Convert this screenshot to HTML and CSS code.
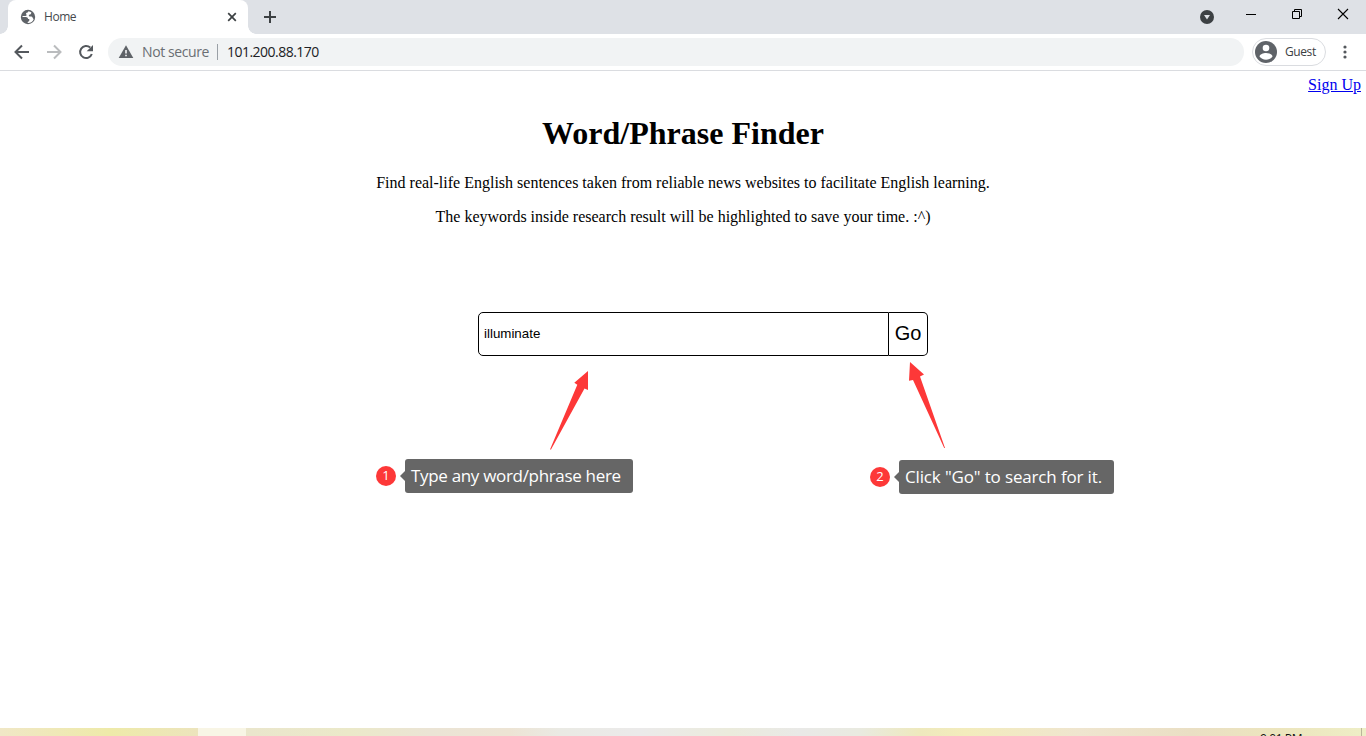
FILE: index.html
```html
<!DOCTYPE html>
<html lang="en">
<head>
<meta charset="utf-8">
<title>Home</title>
<link rel="stylesheet" href="styles.css">
</head>
<body>
<div class="window">
  <header class="tabstrip">
    <div class="tab">
      <svg class="globe" width="16" height="16" viewBox="0 0 16 16"><circle cx="8" cy="8" r="7.200" fill="#5f6368"/><path d="M8.400 2.200c-.4 1-.9 1.400-1.700 1.600-.8.3-.8 1-.3 1.600.6.700 0 1.300-1 1.500-1 .1-2.100-.1-2.900.3L2.300 8h3.600c1.200 0 2 .7 2.200 1.900h1.200v1.500c-.1.900-1.200 1.200-1.600 1.500v1.200c2.800.2 5.200-1.300 6-4-.8-.3-1-1.600-1.800-2.300-.6-.5-1.500-.2-2.300-.3-.8-.2-1.100-1-.5-1.600.5-.5 1.400-.2 1.800-.8.400-.5.100-1.100.6-1.500-.9-.8-2-1.300-3.100-1.400z" fill="#fff"/></svg>
      <span class="tab-title">Home</span>
      <svg class="tab-close" width="10" height="10" viewBox="0 0 10 10"><path d="M1.200 1.200l7.600 7.600M8.800 1.200L1.200 8.800" stroke="#3c4043" stroke-width="1.700"/></svg>
    </div>
    <svg class="new-tab" width="14" height="14" viewBox="0 0 14 14"><path d="M7 1v12M1 7h12" stroke="#3c4043" stroke-width="2"/></svg>
    <div class="window-controls">
      <svg width="44" height="34" viewBox="0 0 44 34"><circle cx="23" cy="17" r="7" fill="#3c4043"/><path d="M20 15h6l-3 4.500z" fill="#dee1e6"/></svg>
      <svg width="46" height="34" viewBox="0 0 46 34"><path d="M18 14.500h10" stroke="#000"/></svg>
      <svg width="46" height="34" viewBox="0 0 46 34"><path d="M18.500 11.500h7v7h-7zM20.500 11.500v-2h7v7h-2" fill="none" stroke="#000"/></svg>
      <svg width="46" height="34" viewBox="0 0 46 34"><path d="M18 9l10 10M28 9L18 19" stroke="#000" stroke-width="1.100"/></svg>
    </div>
  </header>
  <nav class="toolbar">
    <svg class="nav-icon" width="32" height="32" viewBox="0 0 32 32"><path d="M23 16H10M16 9.500L9.500 16l6.500 6.500" fill="none" stroke="#54585d" stroke-width="2"/></svg>
    <svg class="nav-icon" width="32" height="32" viewBox="0 0 32 32"><path d="M9 16h13M16 9.500l6.500 6.500-6.500 6.500" fill="none" stroke="#babcbe" stroke-width="2"/></svg>
    <svg class="nav-icon" width="32" height="32" viewBox="0 0 32 32"><path d="M20.200 11.600A6 6 0 1 0 21.800 18" fill="none" stroke="#54585d" stroke-width="2"/><path d="M23 9v6.300h-6.300z" fill="#54585d"/></svg>
    <div class="address">
      <svg width="16" height="16" viewBox="0 0 16 16"><path d="M8 1.200L15.300 14H.7z" fill="#5f6368"/><path d="M8 6v3.500M8 10.700v1.500" stroke="#fff" stroke-width="1.500"/></svg>
      <span class="security">Not secure</span>
      <span class="divider"></span>
      <span class="url">101.200.88.170</span>
    </div>
    <div class="profile">
      <svg width="22" height="22" viewBox="0 0 22 22"><circle cx="11" cy="11" r="11" fill="#5f6368"/><circle cx="11" cy="7" r="3.300" fill="#fff"/><path d="M4.500 15.600c0-2.300 3.800-3.600 6.500-3.600s6.500 1.300 6.500 3.600c-1.300 2-3.800 3.200-6.500 3.200s-5.200-1.200-6.500-3.200z" fill="#fff"/></svg>
      <span class="guest">Guest</span>
    </div>
    <svg class="kebab" width="4" height="16" viewBox="0 0 4 16"><circle cx="2" cy="3" r="1.600" fill="#54585d"/><circle cx="2" cy="8" r="1.600" fill="#54585d"/><circle cx="2" cy="13" r="1.600" fill="#54585d"/></svg>
  </nav>
  <main class="page">
    <div class="account"><a class="signup" href="#">Sign Up</a></div>
    <h1 class="title">Word/Phrase Finder</h1>
    <p class="intro">Find real-life English sentences taken from reliable news websites to facilitate English learning.</p>
    <p class="intro hint">The keywords inside research result will be highlighted to save your time. :^)</p>
    <form class="search">
      <input class="query" type="text" value="illuminate">
      <button class="go" type="button">Go</button>
    </form>
  </main>
  <footer class="taskbar"><span class="active-app"></span><span class="clock">9:01 PM</span><span class="desktop-edge"></span></footer>
  <svg class="arrows" width="1366" height="736" viewBox="0 0 1366 736"><path d="M588 371L574.300 382.800l3 2L550 449.500h1L584.500 388.500l3.500 1.500z" fill="#fd3838"/><path d="M910 362l14 12.500-4 2L945 448h-.8L913 380l-4 .700z" fill="#fd3838"/></svg>
  <div class="note note-type"><span class="number">1</span><span class="bubble"><span class="type-text">Type any word/phrase here</span></span></div>
  <div class="note note-go"><span class="number">2</span><span class="bubble"><span class="go-text">Click "Go" to search for it.</span></span></div>
</div>
</body>
</html>
```
FILE: styles.css
```css
* { box-sizing: border-box; }
body { margin: 0; background: #fff; overflow: hidden; }
svg { display: block; flex: none; }
.window { position: relative; display: flex; flex-direction: column; width: 1366px; height: 736px; font-family: "Open Sans", "Noto Sans", sans-serif; }
.tabstrip { display: flex; align-items: center; height: 34px; background: #dee1e6; padding-left: 8px; }
.tab { position: relative; display: flex; align-items: center; width: 240px; height: 34px; padding: 0 11px 0 12px; background: #fff; border-radius: 8px 8px 0 0; }
.tab::before, .tab::after { content: ""; position: absolute; bottom: 0; width: 8px; height: 8px; }
.tab::before { left: -8px; background: radial-gradient(circle at 0 0, #dee1e6 7.5px, #fff 8px); }
.tab::after { right: -8px; background: radial-gradient(circle at 100% 0, #dee1e6 7.5px, #fff 8px); }
.tab-title { margin-left: 8px; padding-bottom: 1px; font-size: 12px; letter-spacing: -.45px; color: #45494d; }
.tab-close { margin-left: auto; }
.new-tab { margin-left: 15px; }
.window-controls { display: flex; margin-left: auto; }
.toolbar { display: flex; align-items: center; height: 37px; padding: 0 19px 0 6px; border-bottom: 1px solid #dadce0; }
.address { display: flex; flex: none; align-items: center; width: 1136px; height: 28px; margin-left: 6px; padding-left: 10px; border-radius: 14px; background: #f1f3f4; font-size: 14px; }
.security { width: 67px; margin-left: 8px; padding-bottom: 1px; color: #6a6e73; white-space: nowrap; letter-spacing: -.4px; }
.divider { width: 1px; height: 16px; margin: 0 9px 0 8px; background: #9aa0a6; }
.url { padding-bottom: 1px; color: #202124; letter-spacing: -.52px; }
.profile { display: flex; flex: none; align-items: center; width: 74px; height: 28px; margin-left: 8px; padding-left: 2px; border: 1px solid #dadce0; border-radius: 14px; }
.guest { margin-left: 8px; padding-bottom: 1px; font-size: 12px; letter-spacing: -.4px; color: #3c4043; }
.kebab { margin-left: 17px; }
.page { flex: 1; font-family: "Liberation Serif", serif; font-size: 16px; color: #000; }
.account { display: flex; justify-content: flex-end; padding: 5px 5px 0 0; height: 24px; line-height: 18px; }
.signup { color: #00e; }
.title { margin: 20px 0 0; font-size: 32px; line-height: 36px; text-align: center; }
.intro { margin: 23px 0 0; font-size: 16px; line-height: 18px; text-align: center; }
.hint { margin-top: 16px; }
.search { display: flex; width: 450px; height: 44px; margin: 86px 0 0 478px; }
.query { width: 411px; height: 44px; padding: 0 5px 2px; border: 1px solid #000; border-radius: 5px 0 0 5px; font-family: "Liberation Sans", Arial, sans-serif; font-size: 13.333px; color: #000; outline: 0; }
.go { width: 39px; height: 44px; padding: 0 0 2px; border: 1px solid #000; border-left: 0; border-radius: 0 5px 5px 0; background: #fff; font-family: "Liberation Sans", Arial, sans-serif; font-size: 20px; color: #000; }
.arrows { position: absolute; left: 0; top: 0; pointer-events: none; }
.note { position: absolute; display: flex; align-items: center; height: 34px; }
.note-type { left: 376px; top: 459px; }
.note-go { left: 870px; top: 460px; }
.number { width: 20px; height: 20px; border-radius: 50%; background: #fd3838; color: #fff; font-size: 13px; line-height: 19px; text-align: center; }
.bubble { position: relative; display: flex; align-items: center; height: 34px; margin-left: 9px; padding: 0 0 2px 6px; border-radius: 3px; background: #666; color: #fff; font-size: 17px; white-space: nowrap; }
.bubble::before { content: ""; position: absolute; left: -5px; top: 12px; border: 5px solid transparent; border-left: 0; border-right-color: #666; }
.type-text { letter-spacing: -.32px; }
.go-text { letter-spacing: -.15px; }
.note-type .bubble { width: 228px; }
.note-go .bubble { width: 215px; }
.taskbar { position: relative; display: flex; height: 8px; overflow: hidden; background: linear-gradient(90deg, #f0e7c6 0, #eeeaa9 110px, #ece4bd 200px, #eae6cc 250px, #ebe9c9 350px, #ebe4d5 430px, #ede4d4 510px, #eaeae4 560px, #ebeaea 640px, #ebebdc 730px, #e9e9e7 800px, #e9eae0 860px, #eee9bd 920px, #f3ecbc 965px, #efe5cf 1080px, #eadfc4 1190px, #ece5bd 1280px, #eeeec6 1366px); }
.active-app { width: 48px; margin-left: 198px; background: #f8f5e5; }
.clock { margin-left: 1014px; margin-top: 4px; font-size: 12px; line-height: 14px; letter-spacing: -.4px; color: #111; white-space: nowrap; }
.desktop-edge { width: 1px; margin-left: auto; margin-right: 4px; background: #b9b69a; }
```
